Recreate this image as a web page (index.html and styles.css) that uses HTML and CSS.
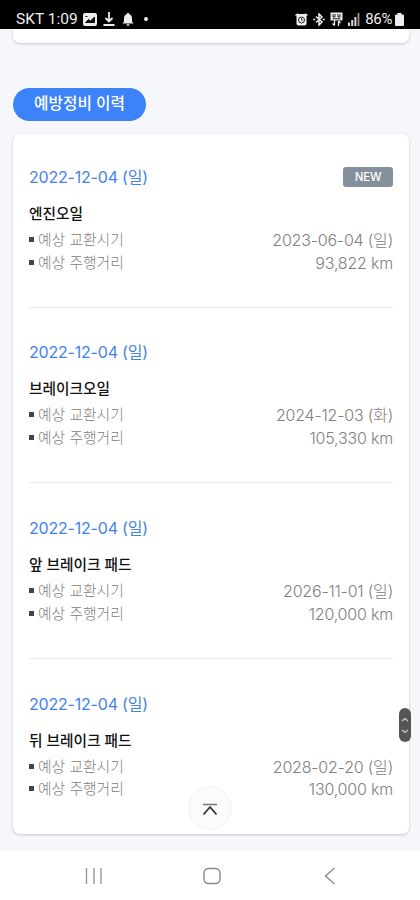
FILE: index.html
```
<!DOCTYPE html>
<html lang="ko">
<head>
<meta charset="utf-8">
<title>예방정비 이력</title>
<link rel="stylesheet" href="styles.css">
</head>
<body>
<div class="status">
	<span class="carrier">SKT 1:09</span>
	<svg class="ic-image" width="14" height="13" viewBox="0 0 14 13"><rect width="14" height="13" rx="2" fill="#eee"/><path d="M2.500 3.500h2M2.500 9.500l3-3 2 1.500 4-4v5.500z" fill="#111" stroke="#111"/></svg>
	<svg class="ic-down" width="12" height="14" viewBox="0 0 12 14" fill="none" stroke="#eee" stroke-width="1.800"><path d="M6 0v9M2.500 6L6 9.500 9.500 6M.5 13h11"/></svg>
	<svg class="ic-bell" width="12" height="13" viewBox="0 0 12 13" fill="#eee"><path d="M6 0c.8 0 1.200.5 1.200 1.200C9 1.800 10 3.200 10 5v3.500l1.500 2H.5L2 8.500V5c0-1.800 1-3.200 2.800-3.800C4.800.5 5.200 0 6 0zM4.500 11.200h3a1.500 1.500 0 0 1-3 0z"/></svg>
	<span class="dot"></span>
	<div class="status-right">
		<svg width="13" height="13" viewBox="0 0 13 13"><path d="M.5 2.500L3 .8M12.500 2.500L10 .8" stroke="#eee" stroke-width="1.500"/><rect x="1.500" y="1" width="10" height="11.500" rx="2" fill="#eee"/><circle cx="6.500" cy="7" r="3" fill="none" stroke="#222"/><path d="M6.500 5v2.200H8" fill="none" stroke="#222" stroke-width=".8"/></svg>
		<svg width="12" height="13" viewBox="0 0 12 13" fill="none" stroke="#eee" stroke-width="1.500"><path d="M3 3.500l6 5.500-3 3V1l3 3-6 5.500"/><path d="M.3 6.500h2M9.700 6.500h2"/></svg>
		<svg width="13" height="15" viewBox="0 0 13 15"><path d="M.5.500h12v8H.5z" fill="#eee"/><path d="M3 2v3h2V2M8 2v3h2V2M2.500 6.800h8" fill="none" stroke="#222"/><path d="M4.500 8v5.500M2.500 11.500l2 2M8.500 14V9M10.500 11l-2-2" fill="none" stroke="#eee" stroke-width="1.300"/></svg>
		<svg width="12" height="13" viewBox="0 0 12 13" fill="#ddd"><path d="M0 9.500h2V13H0zM3.200 7h2v6h-2zM6.400 4h2v9h-2z"/><path d="M9.600 0h1.800v13H9.600z" fill="#999"/></svg>
		<span class="battery">86%</span>
		<svg class="ic-battery" width="9" height="13" viewBox="0 0 9 13" fill="#eee"><path d="M2.500 0h4v1.500H8A1 1 0 0 1 9 2.500V12a1 1 0 0 1-1 1H1a1 1 0 0 1-1-1V2.500a1 1 0 0 1 1-1h1.500z"/></svg>
	</div>
</div>

<div class="content">
	<div class="prev-card"></div>
	<h2 class="pill">예방정비 이력</h2>
	<div class="card">
		<div class="item">
			<div class="date"><span>2022-12-04 (일)</span><span class="new">NEW</span></div>
			<div class="name">엔진오일</div>
			<div class="row"><span class="label">예상 교환시기</span><span class="value">2023-06-04 (일)</span></div>
			<div class="row"><span class="label">예상 주행거리</span><span class="value">93,822 km</span></div>
		</div>
		<div class="item">
			<div class="date"><span>2022-12-04 (일)</span></div>
			<div class="name">브레이크오일</div>
			<div class="row"><span class="label">예상 교환시기</span><span class="value">2024-12-03 (화)</span></div>
			<div class="row"><span class="label">예상 주행거리</span><span class="value">105,330 km</span></div>
		</div>
		<div class="item">
			<div class="date"><span>2022-12-04 (일)</span></div>
			<div class="name">앞 브레이크 패드</div>
			<div class="row"><span class="label">예상 교환시기</span><span class="value">2026-11-01 (일)</span></div>
			<div class="row"><span class="label">예상 주행거리</span><span class="value">120,000 km</span></div>
		</div>
		<div class="item">
			<div class="date"><span>2022-12-04 (일)</span></div>
			<div class="name">뒤 브레이크 패드</div>
			<div class="row"><span class="label">예상 교환시기</span><span class="value">2028-02-20 (일)</span></div>
			<div class="row"><span class="label">예상 주행거리</span><span class="value">130,000 km</span></div>
		</div>
	</div>
</div>

<div class="navbar">
	<svg width="18" height="16" viewBox="0 0 18 16" stroke="#999" stroke-width="1.400"><path d="M1.500 0v16M9 0v16M16 0v16"/></svg>
	<svg width="18" height="18" viewBox="0 0 18 18" fill="none" stroke="#888" stroke-width="1.400"><rect x="1" y="1.500" width="16" height="15" rx="4.500"/></svg>
	<svg width="18" height="18" viewBox="0 0 18 18" fill="none" stroke="#888" stroke-width="1.400"><path d="M13.500 1L4.500 9l9 8"/></svg>
</div>

<div class="top-btn">
	<svg width="16" height="13" viewBox="0 0 16 13" fill="none"><path d="M1 1.500h14" stroke="#777" stroke-width="1.500"/><path d="M1.500 11.500L8 4l6.500 7.500" stroke="#333" stroke-width="1.800"/></svg>
</div>
<div class="scroller">
	<svg width="12" height="34" viewBox="0 0 12 34" fill="none" stroke="#ccc" stroke-width="1.300"><path d="M3 13l3-2.500 3 2.500M3 22l3 2.500 3-2.500"/></svg>
</div>
</body>
</html>
```
FILE: styles.css
```
body {
	margin: 0;
	height: 900px;
	overflow: hidden;
	display: flex;
	flex-direction: column;
	background: #f5f7fb;
	font-family: Inter, "Noto Sans CJK KR", sans-serif;
	color: #808080;
}
.status {
	flex: none;
	height: 29px;
	box-sizing: border-box;
	padding: 9px 16px 0 16px;
	display: flex;
	align-items: center;
	background: #000;
	color: #eee;
	font: 15.500px/20px Roboto, sans-serif;
}
.carrier {
	width: 67px;
	white-space: nowrap;
}
.ic-down {
	margin-left: 6px;
}
.ic-bell {
	margin-left: 7px;
}
.dot {
	width: 4px;
	height: 4px;
	margin-left: 10px;
	border-radius: 50%;
	background: #eee;
}
.status-right {
	margin-left: auto;
	display: flex;
	align-items: center;
	gap: 5px;
}
.battery {
	font-size: 15px;
	letter-spacing: -.4px;
}
.ic-battery {
	margin-left: -2px;
}
.content {
	flex: 1;
	padding: 0 11px 0 13px;
}
.prev-card {
	height: 14px;
	margin-bottom: 45px;
	background: #fff;
	border-radius: 0 0 7px 7px;
	box-shadow: 0 1px 3px rgba(0, 0, 0, .2);
}
.pill {
	width: 133px;
	height: 33px;
	margin: 0 0 13px;
	border-radius: 17px;
	background: #3c82f8;
	color: #fff;
	font-size: 15.700px;
	font-weight: 500;
	line-height: 32px;
	text-align: center;
}
.card {
	height: 700px;
	border-radius: 7px;
	background: #fff;
	box-shadow: 0 1px 3px rgba(0, 0, 0, .2);
}
.item {
	box-sizing: border-box;
	height: 175.700px;
	margin: 0 16px;
	padding-top: 32.500px;
	border-bottom: 1px solid #e9e9e9;
}
.item:first-child {
	height: 173.700px;
	padding-top: 31px;
}
.item:last-child {
	border: 0;
}
.date {
	height: 24px;
	margin-bottom: 13px;
	display: flex;
	align-items: center;
	justify-content: space-between;
	color: #3f83ec;
	font-size: 16px;
	letter-spacing: -.2px;
	line-height: 24px;
}
.new {
	width: 50px;
	height: 20px;
	border-radius: 3px;
	background: #84909b;
	color: #fff;
	font-size: 11.500px;
	font-weight: 500;
	letter-spacing: -.3px;
	line-height: 20px;
	text-align: center;
}
.name {
	height: 24px;
	margin-bottom: 3px;
	color: #111;
	font-size: 14.700px;
	font-weight: 500;
	line-height: 24px;
}
.row {
	height: 22.800px;
	display: flex;
	justify-content: space-between;
	font-weight: 300;
	line-height: 23px;
}
.label {
	display: flex;
	font-size: 14.800px;
}
.label::before {
	content: "";
	width: 5px;
	height: 5px;
	margin: 8px 4px 0 0;
	background: #444;
}
.value {
	font-size: 16px;
	letter-spacing: -.2px;
}
.navbar {
	flex: none;
	height: 49px;
	display: flex;
	align-items: center;
	justify-content: space-between;
	padding: 0 81px 0 85px;
	box-sizing: border-box;
	background: #fff;
}
.top-btn {
	position: absolute;
	left: 188px;
	top: 786px;
	width: 44px;
	height: 44px;
	box-sizing: border-box;
	display: flex;
	align-items: center;
	justify-content: center;
	padding-top: 3px;
	border: 1px solid #f2f2f2;
	border-radius: 50%;
	background: #fbfbfb;
}
.scroller {
	position: absolute;
	left: 399px;
	top: 708px;
	width: 12px;
	height: 34px;
	border-radius: 6px;
	background: #555;
}
```
